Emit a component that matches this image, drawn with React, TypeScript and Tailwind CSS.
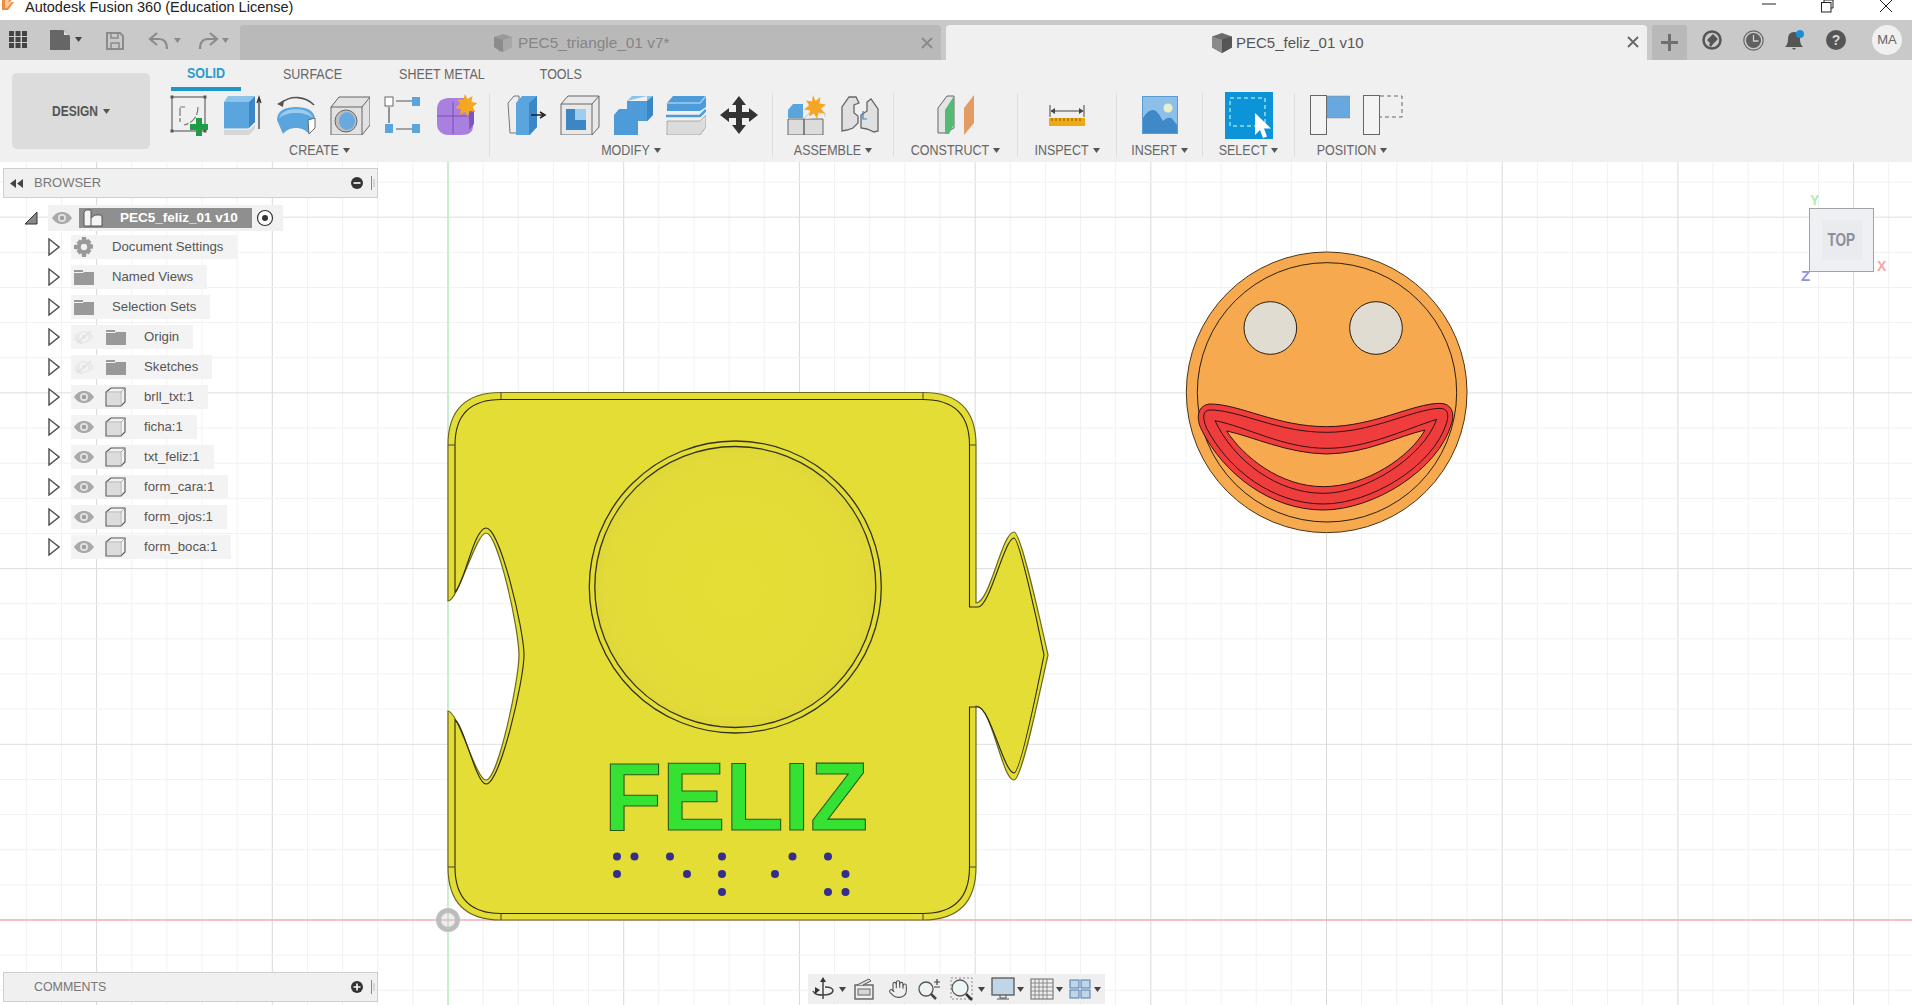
import React from "react";
import { Hand } from "lucide-react";

const Caret = ({ c = "#555" }: { c?: string }) => (
  <svg width="7" height="5" viewBox="0 0 7 5" className="shrink-0"><path d="M0 0h7L3.5 5z" fill={c} /></svg>
);

const I = ({ children, w = 40, h = 40 }: { children: React.ReactNode; w?: number; h?: number }) => (
  <svg width={w} height={h} viewBox={`0 0 ${w} ${h}`} className="shrink-0">{children}</svg>
);

const Sketch = () => (
  <I w={42} h={42}>
    <rect x="2" y="3" width="33" height="34" fill="none" stroke="#666" strokeWidth="1.2" />
    {[[2, 3], [35, 3], [2, 37], [35, 37]].map(([x, y], i) => <rect key={i} x={x - 1.5} y={y - 1.5} width="3" height="3" fill="#555" />)}
    <path d="M10 13h5M10 14v14M28 13c0 10-6 16-14 18" fill="none" stroke="#777" strokeWidth="1.2" strokeDasharray="8 2" />
    <path d="M26 24h6v6h6v6h-6v6h-6v-6h-6v-6h6z" fill="#1f9d45" />
  </I>
);
const Extrude = () => (
  <I>
    <path d="M0 7H25V34H0z" fill="#5aa5dd" />
    <path d="M0 7L4 1H31L25 7z" fill="#8cc3ea" />
    <path d="M25 7L31 1V28L25 34z" fill="#3d86c6" />
    <path d="M0 34H25L31 28V34L25 40H0z" fill="#d6d6d6" />
    <path d="M0 34H25L31 28" fill="none" stroke="#fff" strokeWidth="1.2" />
    <path d="M35 34V3M33 8l2-6 2 6" fill="none" stroke="#333" strokeWidth="1.2" />
  </I>
);
const Revolve = () => (
  <I w={44} h={40}>
    <path d="M2 25C2 15 11 12 21 12s19 3 19 13l-6 14c-3-4-8-6-13-6s-10 2-13 6z" fill="#5aa5dd" />
    <path d="M4 23C6 17 13 14 21 14s15 3 17 9c-4-3-10-5-17-5S8 20 4 23z" fill="#9accee" />
    <path d="M33 25l7-2v10l-6 6z" fill="#fff" stroke="#666" />
    <path d="M6 8C16 0 30 1 39 10" fill="none" stroke="#555" strokeWidth="1.6" />
    <path d="M2 9l7-4-1 7z" fill="#555" />
  </I>
);
const Hole = () => (
  <I>
    <path d="M1 12L9 2H40V30L32 40H1z" fill="#e2e2e2" stroke="#666" />
    <path d="M1 12H32L40 2M32 12V40" fill="none" stroke="#666" />
    <ellipse cx="16" cy="26" rx="11" ry="11" fill="#bfbfbf" stroke="#666" />
    <ellipse cx="17" cy="26" rx="8" ry="9" fill="#69a9de" />
  </I>
);
const Pattern = () => (
  <I w={38} h={40}>
    <path d="M12 6H28M5 12V28M12 34H28" stroke="#555" strokeWidth="1.2" />
    <rect x="1" y="2" width="8" height="9" fill="#fff" stroke="#666" />
    <rect x="28" y="2" width="8" height="9" fill="#5aa5dd" />
    <rect x="1" y="29" width="8" height="9" fill="#5aa5dd" />
    <rect x="28" y="29" width="8" height="9" fill="#5aa5dd" />
  </I>
);
const Form = () => (
  <I w={42} h={42}>
    <path d="M2 16C2 6 8 4 16 4h14c6 2 8 8 8 14v14c0 6-4 9-12 9H14C6 41 2 36 2 30z" fill="#a97fe0" />
    <path d="M2 22H34M18 8V40" stroke="#7a50b4" strokeWidth="1" />
    <path d="M30 10c3 5 5 12 4 26l5-6V16z" fill="#7d55bc" />
    <path d="M30 0l2.500 5 5-3-1 6 6 1-5 4 3 5-6-1-1.500 6-3-5-5 3 1-6-6-1 5-4-3-5 6 1z" fill="#f5a623" />
  </I>
);
const PressPull = () => (
  <I>
    <path d="M1 8L7 1H12V38H3z" fill="#eee" stroke="#777" />
    <path d="M9 8L15 1H30V32L23 40H9z" fill="#5aa5dd" />
    <path d="M22 8L30 1V32L22 40z" fill="#3d86c6" />
    <path d="M24 20H36M33 17l5 3-5 3" fill="none" stroke="#222" strokeWidth="1.5" />
  </I>
);
const Shell = () => (
  <I>
    <path d="M1 9L8 1H39V32L32 40H1z" fill="#e8e8e8" stroke="#666" />
    <path d="M1 9H32L39 1M32 9V40" fill="none" stroke="#666" />
    <path d="M6 14H26V35H6z" fill="#9fcdee" />
    <path d="M6 14H15V25H26V35H6z" fill="#3d86c6" />
  </I>
);
const Combine = () => (
  <I>
    <path d="M14 6L19 1H40V20L34 27V1z" fill="#8cc3ea" />
    <path d="M14 6H34V26H25V40H1V20L6 14H14z" fill="#4d9bd8" />
    <path d="M34 6L40 1V20L34 26z" fill="#3d86c6" />
  </I>
);
const Split = () => (
  <I>
    <path d="M1 8L7 1H40V12L34 16H1z" fill="#4d9bd8" />
    <path d="M1 8H34L40 1" fill="none" stroke="#9fcdee" strokeWidth="1.5" />
    <path d="M0 21H34L40 15" fill="none" stroke="#4d9bd8" strokeWidth="2.500" />
    <path d="M1 26H34L40 20V32L34 40H1z" fill="#dcdcdc" stroke="#888" strokeWidth=".6" />
  </I>
);
const MoveI = () => (
  <I>
    <path d="M20 1l7 9h-4v7h7v-4l9 7-9 7v-4h-7v7h4l-7 9-7-9h4v-7h-7v4l-9-7 9-7v4h7v-7h-4z" fill="#333" />
  </I>
);
const Assemble = () => (
  <I>
    <path d="M1 15L6 9H16V23H1z" fill="#5aa5dd" />
    <path d="M1 24H17V40H1zM17 24H36V40H17z" fill="#dcdcdc" stroke="#666" />
    <path d="M17 24L22 18H38V22" fill="#eee" stroke="#999" strokeWidth=".5" />
    <path d="M26 0l2.500 6 5-4-1 6.500 6.500 1-5 4 4 5-6.500-1-1.500 6.500-3-5.500-5 3 1-6-6-1 5-4-3-5 6 1z" fill="#f5a623" />
  </I>
);
const Joint = () => (
  <I w={38} h={40}>
    <path d="M1 36V12L8 2h7l3 6-5 2v8l4 3v7l-5 5-6 2z" fill="#e0e0e0" stroke="#666" strokeWidth="1.3" />
    <path d="M37 36V14L30 4l-4 3v9l-6 4v13l6 1 7 3z" fill="#e0e0e0" stroke="#666" strokeWidth="1.3" />
    <path d="M22 16v8h4" fill="none" stroke="#3d86c6" strokeWidth="1.2" />
  </I>
);
const Construct = () => (
  <I w={38} h={42}>
    <path d="M1 14L10 2h7V34l-9 5H1z" fill="#e4e4e4" stroke="#666" />
    <path d="M8 16L17 2V30L12 40H8z" fill="#53bb73" />
    <path d="M27 14L37 1V29L27 41z" fill="#e39a63" />
  </I>
);
const Inspect = () => (
  <I w={36} h={22}>
    <path d="M1 1V13M35 1V13M2 7H34" stroke="#444" strokeWidth="1" />
    <path d="M6 4L1.500 7 6 10zM30 4l4.500 3L30 10z" fill="#444" />
    <rect y="14" width="36" height="8" fill="#eea812" />
    <path d="M3 14v3M7 14v3M11 14v3M15 14v3M19 14v3M23 14v3M27 14v3M31 14v3" stroke="#8a5c00" strokeWidth="1" />
  </I>
);
const Insert = () => (
  <I w={36} h={38}>
    <rect width="36" height="38" fill="#8cc0e8" />
    <circle cx="26" cy="12" r="4.500" fill="#e9efc8" />
    <path d="M0 38V24c3-6 7-10 11-10s7 6 10 11c3-3 6-4 8-3s5 6 7 8v8z" fill="#3f89c9" />
    <rect x=".5" y=".5" width="35" height="37" fill="none" stroke="#5a9bd0" />
  </I>
);
const SelectI = () => (
  <I w={48} h={47}>
    <rect width="48" height="47" fill="#0c93d8" />
    <rect x="5" y="6" width="35" height="28" fill="none" stroke="#8fe3e8" strokeWidth="1.5" strokeDasharray="4 3" />
    <path d="M30 21v22l5-5 3 8 4-1.500-3-8h7z" fill="#fff" />
  </I>
);
const Position1 = () => (
  <I w={40} h={40}>
    <rect x=".5" y=".5" width="16" height="39" fill="#f4f4f4" stroke="#666" />
    <rect x="17" y="1" width="23" height="22" fill="#67a8de" stroke="#888" strokeWidth=".5" />
  </I>
);
const Position2 = () => (
  <I w={40} h={40}>
    <rect x=".5" y=".5" width="16" height="39" fill="#f4f4f4" stroke="#666" />
    <path d="M17 1H39V22H17" fill="none" stroke="#666" strokeDasharray="4 3" />
  </I>
);

const Cell = ({ children }: { children: React.ReactNode }) => (
  <div className="w-[53px] h-[44px] flex items-center justify-center shrink-0">{children}</div>
);

const Group = ({ label, w, pl, children, last }: { label: string; w: string; pl: string; children: React.ReactNode; last?: boolean }) => (
  <div className={`${w} h-[64px] mt-[2px] shrink-0 flex flex-col ${last ? "" : "border-r border-[#dedede]"}`}>
    <div className={`${pl} h-[44px] shrink-0 flex items-center ${pl === "pl-0" ? "justify-center" : "justify-start"}`}>{children}</div>
    <div className="mt-[3px] h-[20px] shrink-0 flex items-center justify-center gap-[4px] text-[12.5px] text-[#666]">
      <span className="inline-block scale-y-[1.2]">{label}</span>
      <Caret />
    </div>
  </div>
);

const Eye = ({ off }: { off?: boolean }) => (
  <svg width="20" height="14" viewBox="0 0 20 14" className="shrink-0">
    <path d="M0 7c3-4.500 6.500-6 10-6s7 1.500 10 6c-3 4.500-6.500 6-10 6S3 11.500 0 7z" fill={off ? "#eaeaea" : "#a9a9a9"} />
    <circle cx="10" cy="7" r="4" fill={off ? "#f5f5f5" : "#e4e4e4"} />
    <circle cx="10" cy="7" r="2.300" fill={off ? "#e6e6e6" : "#a0a0a0"} />
    {off && <path d="M3 13L17 1M1 9l7 5" stroke="#e0e0e0" strokeWidth="1.5" />}
  </svg>
);
const Folder = () => (
  <svg width="20" height="16" viewBox="0 0 20 16" className="shrink-0">
    <path d="M0 1h9v2H0zM0 4h9l1-1h10v13H0z" fill="#999" />
  </svg>
);
const Gear = () => (
  <svg width="20" height="20" viewBox="0 0 20 20" className="shrink-0">
    <path d="M8 0h4l.5 3 2-.9 2.900 2.900-1.400 2 3 .5v4l-3 .5 1.400 2L14.500 17.500l-2-1.400L12 20H8l-.5-3.900-2 1.400L2.600 14.600l1.400-2-4-.6V8l4-.5-1.400-2L5.500 2.600l2 .9z" fill="#999" />
    <circle cx="10" cy="10" r="3.200" fill="#f0f0f0" />
  </svg>
);
const Body = () => (
  <svg width="21" height="20" viewBox="0 0 21 20" className="shrink-0">
    <path d="M1 5L6 1H20V15L16 19H1z" fill="#f2f2f2" stroke="#555" strokeWidth="1.100" />
    <path d="M1 5H16L20 1M16 5V19" fill="none" stroke="#999" strokeWidth=".8" />
    <rect x="2" y="6" width="13" height="12" fill="#dcdcdc" />
  </svg>
);
const Tri = () => (
  <svg width="12" height="18" viewBox="0 0 12 18" className="shrink-0">
    <path d="M1 1L11 9 1 17z" fill="#fff" stroke="#555" strokeWidth="1.500" />
  </svg>
);

const rows1 = [
  { label: "Document Settings", icon: <Gear /> },
  { label: "Named Views", icon: <Folder /> },
  { label: "Selection Sets", icon: <Folder /> },
];
const rows2 = [
  { label: "Origin", off: true, icon: <Folder /> },
  { label: "Sketches", off: true, icon: <Folder /> },
  { label: "brll_txt:1", icon: <Body /> },
  { label: "ficha:1", icon: <Body /> },
  { label: "txt_feliz:1", icon: <Body /> },
  { label: "form_cara:1", icon: <Body /> },
  { label: "form_ojos:1", icon: <Body /> },
  { label: "form_boca:1", icon: <Body /> },
];

const BrowserTree = () => (
  <div className="mt-[7px] flex flex-col">
    <div className="h-[26px] mb-[1px] flex items-center">
      <svg width="14" height="14" viewBox="0 0 14 14" className="ml-[24px] shrink-0"><path d="M13 1V13H1z" fill="#888" stroke="#333" /></svg>
      <div className="ml-[10px] h-[26px] w-[235px] bg-[#f1f1f1] flex items-center">
        <div className="ml-[4px]"><Eye /></div>
        <div className="ml-[7px] w-[173px] h-[20px] bg-[#8f8f8f] flex items-center">
          <svg width="20" height="18" viewBox="0 0 20 18" className="ml-[4px] shrink-0">
            <path d="M1 3L3 1H8V9L12 6H18L19 8V17H1z" fill="#f4f4f4" stroke="#555" />
            <path d="M8 9V17" stroke="#555" />
          </svg>
          <span className="ml-[17px] text-[13.5px] font-bold text-white whitespace-nowrap">PEC5_feliz_01 v10</span>
        </div>
        <svg width="18" height="18" viewBox="0 0 18 18" className="ml-[4px] shrink-0">
          <circle cx="9" cy="9" r="7.500" fill="#fff" stroke="#333" strokeWidth="1.200" />
          <circle cx="9" cy="9" r="3" fill="#333" />
        </svg>
      </div>
    </div>
    {rows1.map((r) => (
      <div key={r.label} className="h-[30px] flex items-center">
        <div className="ml-[48px] w-[23px]"><Tri /></div>
        <div className="h-[24px] pl-[3px] pr-[14px] bg-[#f3f3f3] flex items-center">
          <div className="w-[20px] flex items-center justify-center">{r.icon}</div>
          <span className="ml-[18px] text-[13.2px] text-[#555] whitespace-nowrap">{r.label}</span>
        </div>
      </div>
    ))}
    {rows2.map((r) => (
      <div key={r.label} className="h-[30px] flex items-center">
        <div className="ml-[48px] w-[23px]"><Tri /></div>
        <div className="h-[24px] pl-[3px] pr-[14px] bg-[#f3f3f3] flex items-center">
          <Eye off={r.off} />
          <div className="ml-[11px] w-[21px] flex items-center justify-center">{r.icon}</div>
          <span className="ml-[18px] text-[13.2px] text-[#555] whitespace-nowrap">{r.label}</span>
        </div>
      </div>
    ))}
  </div>
);

const PanelBar = ({ label, plus, rew }: { label: string; plus?: boolean; rew?: boolean }) => (
  <div className="ml-[3px] w-[375px] bg-[#f0f0f0] border border-[#cfcfcf] flex items-center relative h-[30px]">
    {rew && (
      <svg width="13" height="9" viewBox="0 0 13 9" className="absolute left-[6px] top-[10px]"><path d="M6 0v9L0 4.500zM13 0v9L7 4.500z" fill="#444" /></svg>
    )}
    <span className={`ml-[30px] ${plus ? "text-[12.4px]" : "text-[13px]"} text-[#777] whitespace-nowrap scale-y-[1.05]`}>{label}</span>
    <svg width="12" height="12" viewBox="0 0 12 12" className="absolute left-[347px] top-[8px]">
      <circle cx="6" cy="6" r="6" fill="#333" />
      <path d={plus ? "M2.500 6h7M6 2.500v7" : "M2.500 6h7"} stroke="#fff" strokeWidth="1.600" />
    </svg>
    <svg width="4" height="14" viewBox="0 0 4 14" className="absolute left-[367px] top-[7px]"><path d="M.5 0v14" stroke="#888" /><path d="M3 3v8" stroke="#bbb" /></svg>
  </div>
);

const xsMinor = Array.from({ length: 56 }, (_, i) => 448 + (i - 13) * 35.14);
const ysMinor = Array.from({ length: 25 }, (_, i) => 920 - (i - 2) * 35.14);
const dots: [number, number][] = [
  [617, 856.5], [634.5, 856.5], [617, 874], [670, 856.5], [687, 874], [722, 856.5], [722, 874], [722, 892],
  [792.5, 856.5], [775, 874], [828, 856.5], [845.5, 874], [828, 892], [845.5, 892],
];

const Scene = () => (
  <svg viewBox="0 162 1912 843" className="absolute inset-0 w-full h-full">
    <defs>
      <radialGradient id="dish" cx="50%" cy="50%" r="50%">
        <stop offset="0%" stopColor="#e5de35" />
        <stop offset="85%" stopColor="#e3dc37" />
        <stop offset="100%" stopColor="#dfd839" />
      </radialGradient>
    </defs>
    {xsMinor.map((x, i) => (
      <line key={i} x1={x} x2={x} y1="162" y2="1005" stroke={(i - 13) % 5 === 0 ? "#d9d9d9" : "#f1f1f1"} strokeWidth="1" />
    ))}
    {ysMinor.map((y, i) => (
      <line key={i} x1="0" x2="1912" y1={y} y2={y} stroke={(i - 2) % 5 === 0 ? "#dedede" : "#f1f1f1"} strokeWidth="1" />
    ))}
    <line x1="448" x2="448" y1="162" y2="1005" stroke="#b6eeb6" strokeWidth="1.200" />
    <line x1="0" x2="1912" y1="920" y2="920" stroke="#f3b4b8" strokeWidth="1.500" />

    <path
      d="M501 392.500L923 392.500Q976 392.500 976 445L976 603C990 603 1002 532 1014 532C1021 532 1040 620 1048 655C1040 690 1022 780 1014 780C1002 780 992 706 976 706L976 867Q976 920 923 920L501 920Q448 920 448 867L448 711C458 711 476 780 486 780C498 780 519 680 519 655C519 630 498 533 486 533C476 533 458 601 448 601L448 445Q448 392.500 501 392.500Z"
      fill="#e4dd35" stroke="#6a6a1c" strokeWidth="1.200"
    />
    <path
      d="M501 399.500H923Q969.500 399.500 969.500 445V607H978C990 607 1004 539 1014 538C1019 538 1037 620 1044 655C1037 690 1020 773 1014 773C1004 773 990 707 978 707H969.500V867Q969.500 913.500 923 913.500H501Q455 913.500 455 867V720C464 725 476 784 486 784C500 784 524 680 524 655C524 630 500 528 486 528C474 528 464 585 455 592V445Q455 399.500 501 399.500Z"
      fill="none" stroke="#2a2a12" strokeWidth="1.100"
    />
    <path d="M501 392.500V399.500M923 392.500V399.500M448 445H455M976 445H969.500M448 867H455M976 867H969.500M501 913.500V920M923 913.500V920" stroke="#444" strokeWidth="1" />
    <circle cx="735.300" cy="587" r="146" fill="#e4dd35" stroke="#33331a" strokeWidth="1.300" />
    <circle cx="735.300" cy="587" r="140.500" fill="url(#dish)" stroke="#33331a" strokeWidth="1.300" />
    <text x="604" y="830" fontSize="96" fontWeight="700" fill="#35e233" stroke="#2a5a1a" strokeWidth="1.100" textLength="264" lengthAdjust="spacingAndGlyphs">FELIZ</text>
    {dots.map(([x, y], i) => <circle key={i} cx={x} cy={y} r="4" fill="#352e8c" />)}

    <g transform="translate(1160 230) scale(0.33333)">
      <circle cx="500" cy="487" r="421" fill="#f6a94e" stroke="#4a3418" strokeWidth="3" />
      <circle cx="501" cy="487" r="389" fill="#f6a94e" stroke="#2a1f10" strokeWidth="3" />
      <circle cx="331" cy="294" r="79" fill="#e0dcd1" stroke="#2a1f10" strokeWidth="3" />
      <circle cx="648" cy="294" r="79" fill="#e0dcd1" stroke="#2a1f10" strokeWidth="3" />
      <path d="M150 522C240 522 350 590 500 590C640 590 760 520 840 520C875 520 885 550 875 580C835 720 640 840 490 840C330 840 190 730 125 600C105 560 115 525 150 522Z" fill="#ef3d3d" stroke="#33100f" strokeWidth="3" />
      <path d="M150 540C240 540 350 607 500 607C640 607 760 537 840 535C862 535 868 552 860 578C820 710 630 822 490 822C340 822 205 720 140 595C125 560 130 540 150 540Z" fill="none" stroke="#33100f" strokeWidth="3" />
      <path d="M165 572C260 590 370 655 500 655C620 655 730 600 830 568C790 680 620 790 490 790C350 790 220 690 165 572Z" fill="none" stroke="#33100f" strokeWidth="3" />
      <path d="M200 603C280 620 380 670 500 672C620 670 710 620 795 600C750 680 620 770 490 770C360 770 250 680 200 603Z" fill="#f6a94e" stroke="#33100f" strokeWidth="3" />
    </g>

    <circle cx="448" cy="920" r="9.500" fill="#cccccc" fillOpacity=".35" stroke="#bdbdbd" strokeWidth="5" />
    <text x="1810" y="205" fontSize="14" fill="#aeeeae" fontWeight="700">Y</text>
    <text x="1877" y="271" fontSize="14" fill="#f3a7a7" fontWeight="700">X</text>
    <text x="1801" y="281" fontSize="15" fill="#8f8fe6" fontWeight="700">Z</text>
  </svg>
);

const ViewCube = () => (
  <div className="absolute left-[1809px] top-[46px] w-[65px] h-[64px] bg-[#eff0f3] border border-[#a3a3a3] flex items-center justify-center">
    <div className="w-[40px] h-[40px] bg-[#e9ebef] flex items-center justify-center">
      <span className="text-[16px] font-bold text-[#8b8f99] scale-x-[0.85] scale-y-[1.1]">TOP</span>
    </div>
  </div>
);

const NavBar = () => (
  <div className="absolute left-[808px] top-[812px] w-[297px] h-[30px] bg-[#efefef] flex items-center">
    <svg width="22" height="24" viewBox="0 0 22 24" className="ml-[4px]">
      <path d="M11 2v20M1 14c2 4 6 4 10 4s9-1 10-4c0-3-4-4-8-4" fill="none" stroke="#444" strokeWidth="1.500" />
      <path d="M11 0l3 5H8zM3 10l5 3-5 4z" fill="#333" />
    </svg>
    <div className="ml-[5px]"><Caret c="#444" /></div>
    <svg width="20" height="22" viewBox="0 0 20 22" className="ml-[8px]">
      <rect x="1" y="7" width="18" height="14" fill="#eee" stroke="#555" strokeWidth="1.300" />
      <rect x="4" y="11" width="12" height="6" fill="#d8d8d8" stroke="#666" />
      <path d="M3 7l12-6 2 2-8 4" fill="#ddd" stroke="#555" />
    </svg>
    <div className="ml-[13px] w-[22px] flex justify-center"><Hand size={20} strokeWidth={1.300} color="#555" /></div>
    <svg width="24" height="22" viewBox="0 0 24 22" className="ml-[8px]">
      <circle cx="9" cy="11" r="7" fill="#eef3f6" stroke="#555" strokeWidth="1.300" />
      <path d="M14 16l5 5" stroke="#444" strokeWidth="2.500" />
      <path d="M20 1v6M17 4h6M17 9h6" stroke="#444" strokeWidth="1.200" />
    </svg>
    <svg width="24" height="24" viewBox="0 0 24 24" className="ml-[9px]">
      <rect x="1" y="1" width="21" height="21" fill="none" stroke="#888" strokeDasharray="2 2" />
      <circle cx="10" cy="11" r="8" fill="#eef5f6" stroke="#555" strokeWidth="1.300" />
      <path d="M16 17l6 6" stroke="#333" strokeWidth="2.500" />
    </svg>
    <div className="ml-[4px]"><Caret c="#444" /></div>
    <svg width="24" height="24" viewBox="0 0 24 24" className="ml-[6px]">
      <rect x="1" y="1" width="22" height="17" fill="#c0d6e6" stroke="#555" strokeWidth="1.300" />
      <path d="M9 18v3h6v-3M6 22h12" fill="none" stroke="#555" />
    </svg>
    <div className="ml-[2px]"><Caret c="#444" /></div>
    <svg width="24" height="24" viewBox="0 0 24 24" className="ml-[6px]">
      <rect x="1" y="2" width="22" height="20" fill="#eee" stroke="#666" />
      <path d="M5 2v20M9 2v20M13 2v20M17 2v20M1 6h22M1 10h22M1 14h22M1 18h22" stroke="#777" strokeWidth=".8" />
    </svg>
    <div className="ml-[2px]"><Caret c="#444" /></div>
    <svg width="22" height="22" viewBox="0 0 22 22" className="ml-[6px]">
      <rect x="1" y="2" width="9" height="8" fill="#c0d6e6" stroke="#4c7fb0" />
      <rect x="12" y="2" width="9" height="8" fill="#c0d6e6" stroke="#4c7fb0" />
      <rect x="1" y="12" width="9" height="8" fill="#c0d6e6" stroke="#4c7fb0" />
      <rect x="12" y="12" width="9" height="8" fill="#c0d6e6" stroke="#4c7fb0" />
    </svg>
    <div className="ml-[3px]"><Caret c="#444" /></div>
  </div>
);

export default function App() {
  return (
    <div className="w-[1912px] h-[1005px] overflow-hidden flex flex-col bg-white font-['Liberation_Sans',Arial,sans-serif]">
      {/* title bar */}
      <div className="h-[20px] shrink-0 bg-white flex items-start relative overflow-hidden">
        <svg width="14" height="14" viewBox="0 4 14 14" className="ml-[2px] shrink-0">
          <path d="M0 0h12L8 6h4L6 14H0z" fill="#f08a3c" />
          <path d="M3 0h7L6 6h4L5 12H3z" fill="#f7c9a0" />
        </svg>
        <span className="ml-[9px] text-[14.5px] leading-[14px] text-[#222] whitespace-nowrap">Autodesk Fusion 360 (Education License)</span>
        <svg width="14" height="2" className="absolute left-[1762px] top-[3px]"><path d="M0 1h14" stroke="#222" /></svg>
        <svg width="13" height="13" viewBox="0 0 13 13" className="absolute left-[1821px] top-0">
          <path d="M3 2V0h9v8h-2" fill="none" stroke="#222" /><rect x=".5" y="2.500" width="9.500" height="9.500" fill="none" stroke="#222" />
        </svg>
        <svg width="12" height="12" viewBox="0 0 12 12" className="absolute left-[1880px] top-0"><path d="M0 0l12 12M12 0L0 12" stroke="#222" /></svg>
      </div>

      {/* tab bar */}
      <div className="h-[40px] shrink-0 bg-[#c9c9c9] flex items-end relative">
        <svg width="18" height="18" viewBox="0 0 18 18" className="absolute left-[9px] top-[11px]">
          {[0, 6.500, 13].map((x) => [0, 6, 12].map((y) => <rect key={`${x}-${y}`} x={x} y={y} width="5" height="5" fill="#444" />))}
        </svg>
        <svg width="21" height="20" viewBox="0 0 21 20" className="absolute left-[50px] top-[10px]"><path d="M0 0h13l7 6v14H0z" fill="#666" /><path d="M14 1v4h5z" fill="#ddd" /></svg>
        <div className="absolute left-[75px] top-[17px]"><Caret c="#444" /></div>
        <svg width="18" height="18" viewBox="0 0 18 18" className="absolute left-[106px] top-[12px]"><path d="M1 1h13l3 3v13H1z" fill="none" stroke="#8b8b8b" strokeWidth="2" /><path d="M5 1v5h7V1M5 17v-6h8v6" fill="none" stroke="#8b8b8b" strokeWidth="1.500" /></svg>
        <svg width="21" height="18" viewBox="0 0 21 18" className="absolute left-[148px] top-[12px]"><path d="M9 1L2 7l7 6M3 7h8c5 0 8 3 8 10" fill="none" stroke="#8b8b8b" strokeWidth="2.200" /></svg>
        <div className="absolute left-[174px] top-[18px]"><Caret c="#8b8b8b" /></div>
        <svg width="21" height="18" viewBox="0 0 21 18" className="absolute left-[198px] top-[12px]"><path d="M12 1l7 6-7 6M18 7h-8C5 7 2 10 2 17" fill="none" stroke="#8b8b8b" strokeWidth="2.200" /></svg>
        <div className="absolute left-[222px] top-[18px]"><Caret c="#8b8b8b" /></div>

        <div className="ml-[240px] w-[701px] h-[35px] bg-[#b9b9b9] rounded-t-[4px] flex items-center relative">
          <svg width="20" height="20" viewBox="0 0 20 20" className="ml-[253px]"><path d="M1 4l9-3 9 3v10l-9 5-4-1-5-4z" fill="#9a9a9a" /><path d="M1 4l9 3v12l-9-5z" fill="#8b8b8b" /><path d="M10 7l9-3v10l-9 5z" fill="#a8a8a8" /></svg>
          <span className="ml-[5px] mt-[1px] text-[15.4px] text-[#858585] whitespace-nowrap">PEC5_triangle_01 v7*</span>
          <svg width="12" height="12" viewBox="0 0 12 12" className="absolute left-[681px] top-[12px]"><path d="M1 1l10 10M11 1L1 11" stroke="#8a8a8a" strokeWidth="1.800" /></svg>
        </div>
        <div className="ml-[5px] w-[701px] h-[35px] bg-[#f0f0f0] rounded-t-[4px] flex items-center relative">
          <svg width="22" height="22" viewBox="0 0 20 20" className="ml-[265px]"><path d="M1 4l9-3 9 3v10l-9 5-9-5z" fill="#6b6b6b" /><path d="M1 4l9 3v12l-9-5z" fill="#8a8a8a" /><path d="M10 7l9-3v10l-9 5z" fill="#555" /></svg>
          <span className="ml-[3px] mt-[1px] text-[15px] text-[#555] whitespace-nowrap">PEC5_feliz_01 v10</span>
          <svg width="12" height="12" viewBox="0 0 12 12" className="absolute left-[681px] top-[11px]"><path d="M1 1l10 10M11 1L1 11" stroke="#666" strokeWidth="1.800" /></svg>
        </div>
        <div className="ml-[5px] w-[35px] h-[35px] bg-[#b9b9b9] rounded-t-[3px] flex items-center justify-center">
          <svg width="17" height="17" viewBox="0 0 17 17"><path d="M8.500 0v17M0 8.500h17" stroke="#6f6f6f" strokeWidth="3" /></svg>
        </div>
        <svg width="20" height="20" viewBox="0 0 20 20" className="absolute left-[1702px] top-[10px]">
          <circle cx="10" cy="10" r="8.500" fill="none" stroke="#555" strokeWidth="2.500" />
          <path d="M5 10l6-6 5 5-5 5-2 3-2-2 1-2z" fill="#555" />
        </svg>
        <svg width="21" height="21" viewBox="0 0 21 21" className="absolute left-[1743px] top-[10px]">
          <circle cx="10.500" cy="10.500" r="9.700" fill="none" stroke="#666" strokeWidth="1.200" />
          <circle cx="10.500" cy="10.500" r="7.500" fill="#606060" />
          <path d="M10.500 5v6h5" fill="none" stroke="#d0d0d0" strokeWidth="1.300" />
        </svg>
        <svg width="22" height="22" viewBox="0 0 22 22" className="absolute left-[1785px] top-[9px]">
          <path d="M9 3c4 0 6 3 6 7 0 4 1 6 3 8H0c2-2 3-4 3-8 0-4 2-7 6-7z" fill="#555" />
          <path d="M7 19h4l-2 2z" fill="#555" />
          <circle cx="15" cy="5" r="4" fill="#1a8fd6" />
        </svg>
        <svg width="20" height="20" viewBox="0 0 20 20" className="absolute left-[1826px] top-[10px]">
          <circle cx="10" cy="10" r="10" fill="#555" />
          <text x="10" y="15" textAnchor="middle" fontSize="14" fontWeight="700" fill="#d8d8d8">?</text>
        </svg>
        <div className="absolute left-[1872px] top-[5px] w-[30px] h-[30px] rounded-full bg-[#f0f0f0] flex items-center justify-center text-[13px] text-[#666]">MA</div>
      </div>

      {/* toolbar */}
      <div className="h-[102px] shrink-0 bg-[#f0f0f0] flex">
        <div className="ml-[12px] mt-[13px] w-[138px] h-[76px] bg-[#dcdcdc] rounded-[5px] flex items-center justify-center gap-[5px] text-[#555]">
          <span className="text-[12px] font-bold scale-y-[1.15]">DESIGN</span>
          <Caret />
        </div>
        <div className="flex-1 flex flex-col">
          <div className="h-[31px] flex items-start">
            <div className="ml-[21px] w-[70px] h-[31px] border-b-[4px] border-[#1e96c8] flex justify-center pt-[5px] text-[12.5px] font-bold text-[#2d9bc9]"><span className="scale-y-[1.2]">SOLID</span></div>
            <span className="ml-[42px] mt-[5px] text-[12.5px] text-[#666] scale-y-[1.2]">SURFACE</span>
            <span className="ml-[57px] mt-[5px] text-[12.5px] text-[#666] scale-y-[1.2]">SHEET METAL</span>
            <span className="ml-[55px] mt-[5px] text-[12.5px] text-[#666] scale-y-[1.2]">TOOLS</span>
          </div>
          <div className="flex">
            <Group label="CREATE" w="w-[340px]" pl="pl-[14px]">
              <Cell><Sketch /></Cell><Cell><Extrude /></Cell><Cell><Revolve /></Cell><Cell><Hole /></Cell><Cell><Pattern /></Cell><Cell><Form /></Cell>
            </Group>
            <Group label="MODIFY" w="w-[283px]" pl="pl-[10px]">
              <Cell><PressPull /></Cell><Cell><Shell /></Cell><Cell><Combine /></Cell><Cell><Split /></Cell><Cell><MoveI /></Cell>
            </Group>
            <Group label="ASSEMBLE" w="w-[121px]" pl="pl-[7px]">
              <Cell><Assemble /></Cell><Cell><Joint /></Cell>
            </Group>
            <Group label="CONSTRUCT" w="w-[124px]" pl="pl-0"><Construct /></Group>
            <Group label="INSPECT" w="w-[99px]" pl="pl-0"><Inspect /></Group>
            <Group label="INSERT" w="w-[86px]" pl="pl-0"><Insert /></Group>
            <Group label="SELECT" w="w-[92px]" pl="pl-0"><SelectI /></Group>
            <Group label="POSITION" w="w-[114px]" pl="pl-[8px]" last>
              <Cell><Position1 /></Cell><Cell><Position2 /></Cell>
            </Group>
          </div>
        </div>
      </div>

      {/* viewport */}
      <div className="flex-1 relative overflow-hidden">
        <Scene />
        <ViewCube />
        <NavBar />
        <div className="absolute left-0 top-[6px] w-[400px]">
          <PanelBar label="BROWSER" rew />
          <BrowserTree />
        </div>
        <div className="absolute left-0 top-[810px] w-[400px]">
          <PanelBar label="COMMENTS" plus />
        </div>
      </div>
    </div>
  );
}
